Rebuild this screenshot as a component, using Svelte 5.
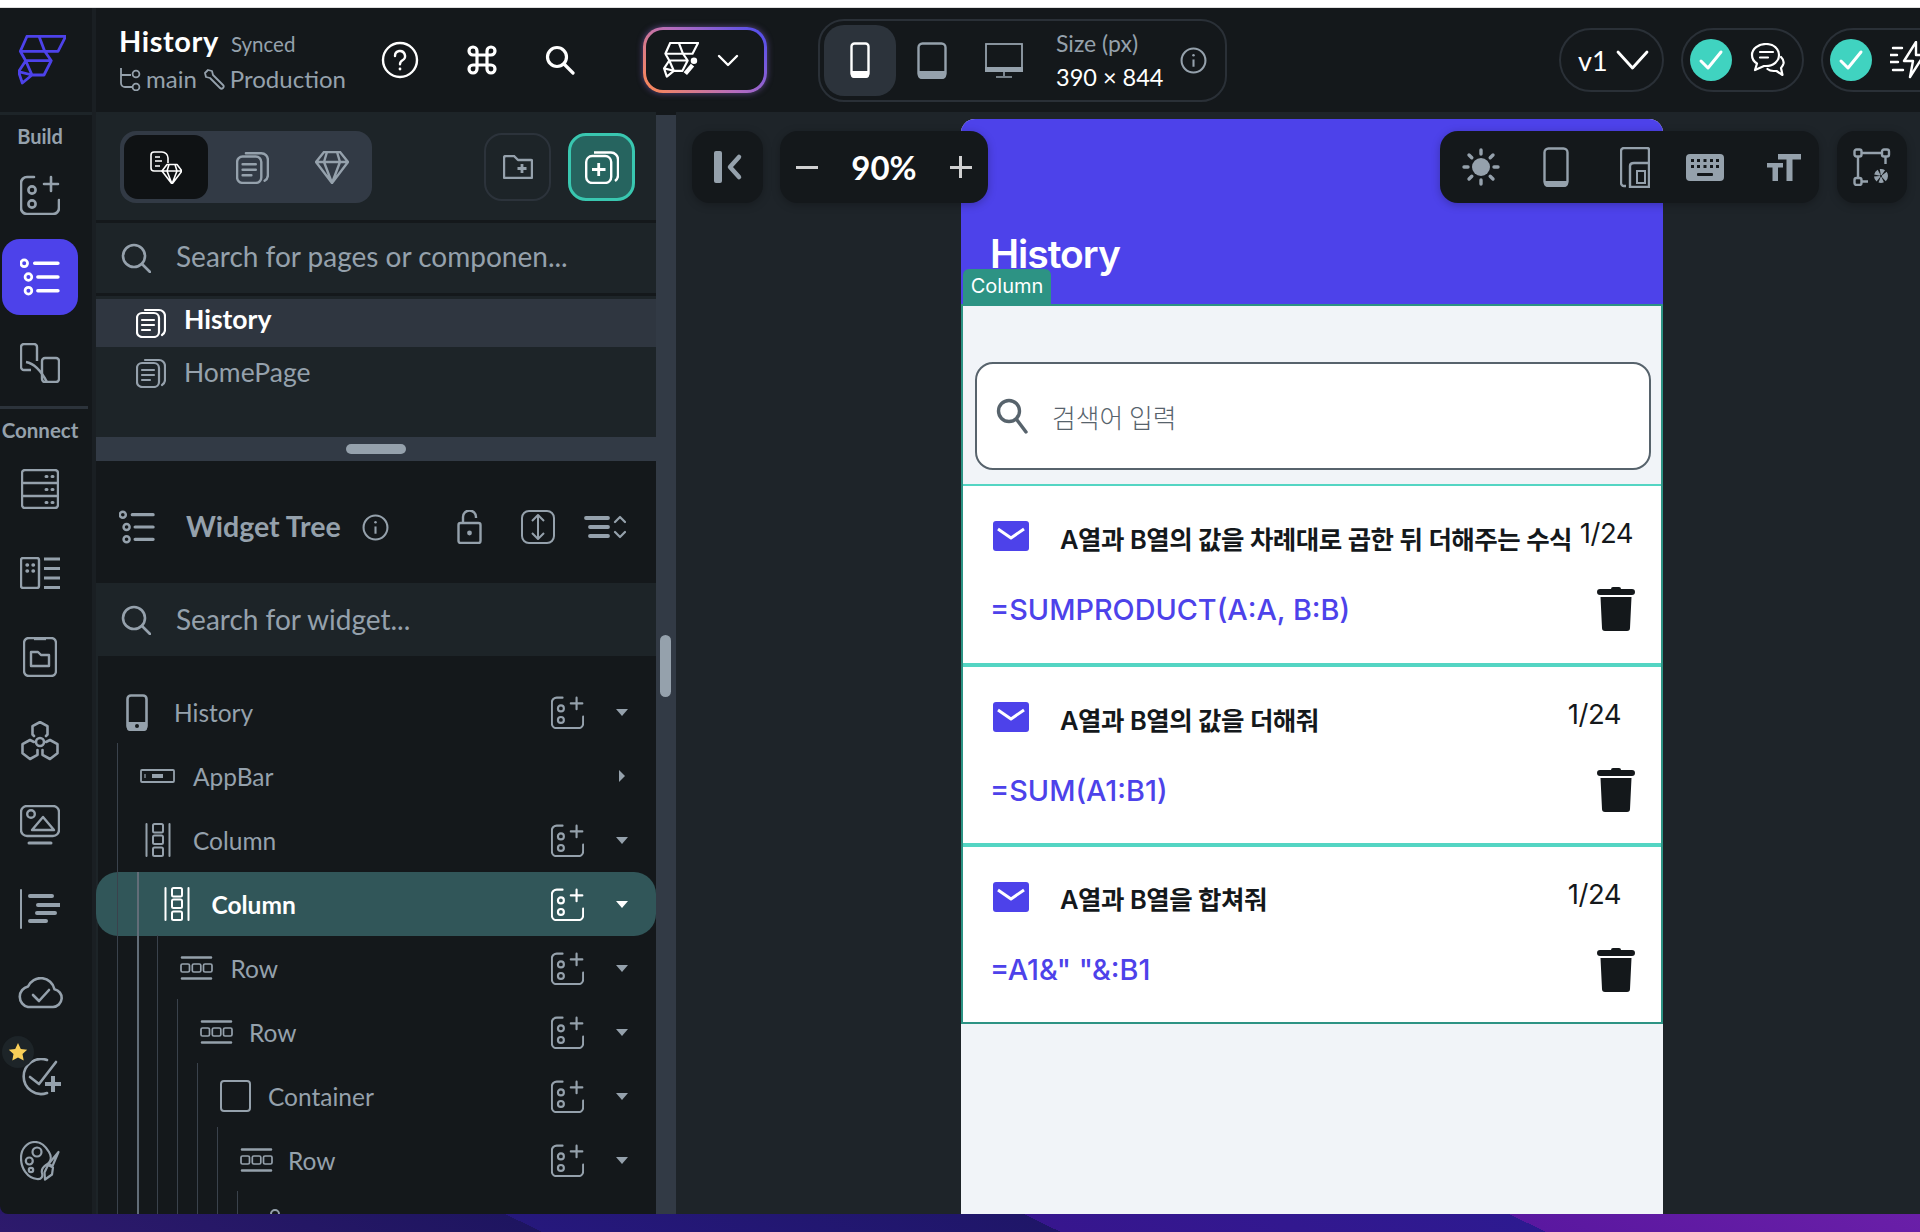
<script>
  const tree = [
    { label: "History", left: 30, text: 79, icon: "phone", add: true, caret: "down" },
    { label: "AppBar", left: 44, text: 98, icon: "appbar", add: false, caret: "right" },
    { label: "Column", left: 49, text: 98, icon: "column", add: true, caret: "down" },
    { label: "Column", left: 68, text: 116.5, icon: "column", add: true, caret: "down", active: true },
    { label: "Row", left: 84, text: 135.5, icon: "row", add: true, caret: "down" },
    { label: "Row", left: 104, text: 154, icon: "row", add: true, caret: "down" },
    { label: "Container", left: 124, text: 173, icon: "container", add: true, caret: "down" },
    { label: "Row", left: 144, text: 193, icon: "row", add: true, caret: "down" },
    { label: "", left: 169, text: 213, icon: "stack", add: false, caret: "none" }
  ];

  // guide lines of the tree: x and where they start, from the tree's top
  const guides = [
    { x: 21, top: 87 },
    { x: 41, top: 216, bright: true },
    { x: 61, top: 279 },
    { x: 81, top: 343 },
    { x: 101, top: 407 },
    { x: 121, top: 471 },
    { x: 141, top: 535 }
  ];

  const cards = [
    { title: "A열과 B열의 값을 차례대로 곱한 뒤 더해주는 수식", formula: "=SUMPRODUCT(A:A, B:B)", tight: true },
    { title: "A열과 B열의 값을 더해줘", formula: "=SUM(A1:B1)" },
    { title: "A열과 B열을 합쳐줘", formula: '=A1&" "&:B1' }
  ];
</script>

{#snippet addWidget(size)}
  <svg width={size} height={size} viewBox="0 0 40 40" fill="none" stroke="currentColor" stroke-width="2.6" stroke-linecap="round">
    <path d="M14 2H7a6 6 0 0 0-6 6v25a6 6 0 0 0 6 6h26a6 6 0 0 0 6-6v-8" />
    <circle cx="12" cy="15" r="3.6" />
    <circle cx="12" cy="29" r="3.6" />
    <path d="M31 2v14M24 9h14" />
  </svg>
{/snippet}

{#snippet pagesIcon(w, h)}
  <svg width={w} height={h} viewBox="0 0 30 30" fill="none" stroke="currentColor" stroke-width="2.2" stroke-linecap="round">
    <rect x="1" y="5" width="22" height="24" rx="5" />
    <path d="M9 2h14a6 6 0 0 1 6 6v14a6 6 0 0 1-3 5" />
    <path d="M6 12h12M6 17h12M6 22h8" />
  </svg>
{/snippet}

{#snippet searchIcon(w)}
  <svg width={w} height={w} viewBox="0 0 30 30" fill="none" stroke="currentColor" stroke-width="2.6" stroke-linecap="round">
    <circle cx="13" cy="13" r="11" />
    <path d="M21 21l8 8" />
  </svg>
{/snippet}

{#snippet listIcon(w)}
  <svg width={w} height={w} viewBox="0 0 38 38" fill="none" stroke="currentColor" stroke-width="2.6" stroke-linecap="round">
    <circle cx="4" cy="6" r="3.2" />
    <circle cx="8" cy="19" r="3.2" />
    <circle cx="8" cy="32" r="3.2" />
    <path d="M14 6h22M17 19h19M17 32h19" stroke-width="3.4" />
  </svg>
{/snippet}

{#snippet infoIcon(w)}
  <svg width={w} height={w} viewBox="0 0 26 26" fill="none" stroke="currentColor" stroke-width="2">
    <circle cx="13" cy="13" r="11.5" />
    <path d="M13 12v7" />
    <circle cx="13" cy="8" r="1.2" fill="currentColor" stroke="none" />
  </svg>
{/snippet}

{#snippet checkBadge()}
  <span class="check">
    <svg width="26" height="22" viewBox="0 0 26 22" fill="none" stroke="#fff" stroke-width="3" stroke-linecap="round" stroke-linejoin="round">
      <path d="M3 12l7 7L23 3" />
    </svg>
  </span>
{/snippet}

{#snippet logoShape()}
  <path d="M9 1.300H47.700L40 16.300H2.300zM21 1.300l5.700 15M2.300 16.300l5.400 9.400H33.300L26.700 16.300M33.300 25.700L26 40H14L7.700 25.700 0.500 36.700 4.300 48 14 40 0.500 36.700" />
{/snippet}

{#snippet treeIcon(name, color)}
  {#if name === "phone"}
    <svg width="22" height="37" viewBox="0 0 22 37" fill="none">
      <rect x="1.500" y="1.500" width="19" height="34" rx="3.500" stroke={color} stroke-width="2.600" />
      <path d="M1 28h20v6a3 3 0 0 1-3 3H4a3 3 0 0 1-3-3z" fill={color} />
      <circle cx="11" cy="32" r="2" fill="#14181b" />
    </svg>
  {:else if name === "appbar"}
    <svg width="35" height="14" viewBox="0 0 35 14" fill="none" stroke={color} stroke-width="1.800">
      <rect x="1" y="1" width="33" height="12" rx="1" />
      <rect x="12" y="5" width="11" height="4" fill={color} stroke="none" />
      <path d="M5 5v4" stroke-width="1.200" />
    </svg>
  {:else if name === "column"}
    <svg width="26" height="34" viewBox="0 0 26 34" fill="none" stroke={color} stroke-width="2">
      <path d="M1.500 1v32M24.500 1v32" stroke-linecap="round" />
      <rect x="8" y="1" width="10" height="8.500" rx="1.500" />
      <rect x="8" y="12.500" width="10" height="8.500" rx="1.500" />
      <rect x="8" y="24.500" width="10" height="8.500" rx="1.500" />
    </svg>
  {:else if name === "row"}
    <svg width="33" height="24" viewBox="0 0 33 24" fill="none" stroke={color} stroke-width="1.700">
      <path d="M2 1.500h29M2 22.500h29" stroke-width="2.600" stroke-linecap="round" />
      <rect x="1" y="8" width="8.500" height="8" rx="1.500" />
      <rect x="12.300" y="8" width="8.500" height="8" rx="1.500" />
      <rect x="23.500" y="8" width="8.500" height="8" rx="1.500" />
    </svg>
  {:else if name === "stack"}
    <svg width="20" height="32" viewBox="0 0 20 32" fill="none" stroke={color} stroke-width="2">
      <circle cx="10" cy="6" r="4" />
      <path d="M2 30V18h16v12" />
    </svg>
  {:else}
    <svg width="31" height="32" viewBox="0 0 31 32" fill="none">
      <rect x="1" y="1" width="29" height="30" rx="3" stroke={color} stroke-width="2" />
    </svg>
  {/if}
{/snippet}

<div class="page">
  <div class="strip"></div>

  <header class="topbar">
    <div class="logo-cell">
      <svg width="48" height="50" viewBox="0 0 48 50" fill="none" stroke="#4d42ea" stroke-width="2.800" stroke-linejoin="round">
        {@render logoShape()}
      </svg>
    </div>

    <div class="project">
      <div class="project-top">
        <span class="project-name">History</span>
        <span class="synced">Synced</span>
      </div>
      <div class="project-bottom">
        <svg width="22" height="24" viewBox="0 0 22 24" fill="none" stroke="currentColor" stroke-width="1.800">
          <path d="M2 1v15a4 4 0 0 0 4 4h7M2 8h10" />
          <circle cx="17" cy="7" r="3.400" />
          <circle cx="17" cy="20" r="3.400" />
        </svg>
        <span>main</span>
        <svg class="wrench" width="22" height="22" viewBox="0 0 22 22" fill="none" stroke="currentColor" stroke-width="1.800" stroke-linejoin="round">
          <path d="M2 5l3-3 4 1 1 4 10 10a2.100 2.100 0 0 1-3 3L7 10 3 9z" />
        </svg>
        <span>Production</span>
      </div>
    </div>

    <div class="top-tools">
      <svg width="38" height="38" viewBox="0 0 38 38" fill="none" stroke="#fff" stroke-width="2.400" stroke-linecap="round">
        <circle cx="19" cy="19" r="17" />
        <path d="M14 15a5 5 0 1 1 7.500 4.300c-1.700 1-2.500 2-2.500 4" />
        <circle cx="19" cy="28" r="1.400" fill="#fff" stroke="none" />
      </svg>
      <svg width="32" height="32" viewBox="0 0 32 32" fill="none" stroke="#fff" stroke-width="3.200">
        <path d="M11 11h10v10H11zM11 11H7a4 4 0 1 1 4-4zM21 11V7a4 4 0 1 1 4 4zM21 21h4a4 4 0 1 1-4 4zM11 21v4a4 4 0 1 1-4-4z" />
      </svg>
      <svg width="30" height="30" viewBox="0 0 30 30" fill="none" stroke="#fff" stroke-width="3.200" stroke-linecap="round">
        <circle cx="12" cy="12" r="9.500" />
        <path d="M19 19l9 9" />
      </svg>
    </div>

    <div class="ai-btn">
      <div class="ai-inner">
        <svg width="36" height="36" viewBox="0 0 48 50" fill="none" stroke="#fff" stroke-width="3" stroke-linejoin="round">
          {@render logoShape()}
          <path d="M30 44l10-12" stroke-width="6" />
          <circle cx="42" cy="26" r="4.500" fill="#fff" stroke="none" />
        </svg>
        <svg width="22" height="13" viewBox="0 0 22 13" fill="none" stroke="#fff" stroke-width="2.400" stroke-linecap="round" stroke-linejoin="round">
          <path d="M2 2l9 9 9-9" />
        </svg>
      </div>
    </div>

    <div class="devices">
      <div class="device selected">
        <svg width="20" height="36" viewBox="0 0 20 36" fill="none">
          <rect x="1.500" y="1.500" width="17" height="33" rx="3" stroke="#fff" stroke-width="2.400" />
          <path d="M1 29h18v4a3 3 0 0 1-3 3H4a3 3 0 0 1-3-3z" fill="#fff" />
        </svg>
      </div>
      <div class="device">
        <svg width="30" height="37" viewBox="0 0 30 37" fill="none">
          <rect x="1.500" y="1.500" width="27" height="34" rx="4" stroke="#95a1ac" stroke-width="2.400" />
          <path d="M1 29h28v4a4 4 0 0 1-4 4H5a4 4 0 0 1-4-4z" fill="#95a1ac" />
        </svg>
      </div>
      <div class="device">
        <svg width="38" height="35" viewBox="0 0 38 35" fill="none">
          <rect x="1" y="1" width="36" height="24" stroke="#95a1ac" stroke-width="1.800" />
          <path d="M0 24h38v5H0z" fill="#95a1ac" />
          <path d="M19 29v4M11 34h16" stroke="#95a1ac" stroke-width="1.600" />
        </svg>
      </div>
      <div class="size">
        <span class="size-label">Size (px)</span>
        <span class="size-value">390 × 844</span>
      </div>
      <span class="size-info">{@render infoIcon(27)}</span>
    </div>

    <div class="status">
      <div class="pill version">
        <span>v1</span>
        <svg width="33" height="20" viewBox="0 0 33 20" fill="none" stroke="#fff" stroke-width="2.800" stroke-linecap="round" stroke-linejoin="round">
          <path d="M2 2l14.500 16L31 2" />
        </svg>
      </div>
      <div class="pill status-pill">
        {@render checkBadge()}
        <svg width="36" height="34" viewBox="0 0 36 34" fill="none" stroke="#fff" stroke-width="2.200" stroke-linejoin="round" stroke-linecap="round">
          <path d="M16 1c7.500 0 13 4.600 13 11s-5.500 11-13 11h-2l-9 4 2-6.500C3.500 18.500 2 15.500 2 12 2 5.600 8.500 1 16 1z" />
          <path d="M10 9h13M10 14.500h8" />
          <path d="M31 14c2 2 3 4 2.500 6.500-.5 2-1.500 3.500-2.500 4.500l1.500 7-6-4h-3c-2.500 0-4.500-.8-6-2" />
        </svg>
      </div>
      <div class="pill status-pill last">
        {@render checkBadge()}
        <svg width="30" height="38" viewBox="0 0 30 38" fill="none" stroke="#fff" stroke-width="2.400" stroke-linejoin="round" stroke-linecap="round">
          <path d="M3 7h9M0 14h7M3 29h10M0 21h8" />
          <path d="M26 1L14 20h9l-3 16 14-22h-8z" />
        </svg>
      </div>
    </div>
  </header>

  <main class="main">
    <nav class="rail">
      <div class="rail-label">Build</div>
      <div class="rail-item first">{@render addWidget(40)}</div>
      <div class="rail-item"><div class="rail-active">{@render listIcon(40)}</div></div>
      <div class="rail-item after">
        <svg width="40" height="40" viewBox="0 0 40 40" fill="none" stroke="currentColor" stroke-width="2.400" stroke-linejoin="round">
          <path d="M11 27H4a3 3 0 0 1-3-3V4a3 3 0 0 1 3-3h10a3 3 0 0 1 3 3v14" />
          <rect x="22" y="15" width="17" height="24" rx="3" />
          <path d="M6 19c6 1 14 7 21 20" />
        </svg>
      </div>
      <div class="rail-sep"></div>
      <div class="rail-label connect">Connect</div>
      <div class="rail-item">
        <svg width="38" height="40" viewBox="0 0 38 40" fill="none" stroke="currentColor" stroke-width="2.400">
          <rect x="1" y="1" width="36" height="38" rx="3" />
          <path d="M1 14h36M1 27h36" />
          <path d="M25 7.500h1M31 7.500h1M25 20.500h1M31 20.500h1M25 33.500h1M31 33.500h1" stroke-width="3" stroke-linecap="round" />
        </svg>
      </div>
      <div class="rail-item">
        <svg width="40" height="32" viewBox="0 0 40 32" fill="none" stroke="currentColor" stroke-width="2.400">
          <rect x="1" y="1" width="18" height="30" rx="2" />
          <path d="M7 8h.5M13 8h.5M7 14h.5M13 14h.5" stroke-width="3.400" stroke-linecap="round" />
          <path d="M24 2h16M24 11.500h16M24 21h16M24 30.500h16" stroke-width="3" />
        </svg>
      </div>
      <div class="rail-item">
        <svg width="34" height="40" viewBox="0 0 34 40" fill="none" stroke="currentColor" stroke-width="2.400" stroke-linejoin="round">
          <rect x="1" y="1" width="32" height="38" rx="5" />
          <path d="M11 1.500h12" stroke-width="3.400" />
          <path d="M8 15h7l3 3h8v11H8z" />
        </svg>
      </div>
      <div class="rail-item">
        <svg width="40" height="40" viewBox="0 0 40 40" fill="none" stroke="currentColor" stroke-width="2.600" stroke-linejoin="round" stroke-linecap="round">
          <path d="M14 15l-1.500-1.500V5.200L20 1l7.500 4.200v8.300L26 15M14 21l-4-2-7.500 4.200v9L10 38l7.500-4.200v-4.800M26 21l4-2 7.500 4.200v9L30 38l-7.500-4.200v-4.800" />
          <circle cx="20" cy="21" r="4" />
        </svg>
      </div>
      <div class="rail-item">
        <svg width="40" height="40" viewBox="0 0 40 40" fill="none" stroke="currentColor" stroke-width="2.400" stroke-linejoin="round">
          <rect x="1" y="1" width="38" height="30" rx="6" />
          <circle cx="11" cy="9" r="3.800" />
          <path d="M12 25l11-13 11 13z" />
          <path d="M9 38h22" stroke-width="3" stroke-linecap="round" />
        </svg>
      </div>
      <div class="rail-item">
        <svg width="40" height="40" viewBox="0 0 40 40" fill="none" stroke="currentColor" stroke-linecap="round">
          <path d="M1 1v38" stroke-width="2" />
          <path d="M10 7h22M18 16h22M17 24h18M10 32h16" stroke-width="4" />
        </svg>
      </div>
      <div class="rail-item">
        <svg width="46" height="32" viewBox="0 0 46 32" fill="none" stroke="currentColor" stroke-width="2.600" stroke-linejoin="round" stroke-linecap="round">
          <path d="M11 30h25a9 9 0 0 0 1.500-17.800A14 14 0 0 0 11 9.500 10.500 10.500 0 0 0 11 30z" />
          <path d="M16 18l6 6 10-11" />
        </svg>
      </div>
      <div class="rail-item">
        <span class="star">
          <svg width="20" height="20" viewBox="0 0 20 20"><path d="M10 1l2.800 5.900 6.400.8-4.700 4.400 1.200 6.400L10 15.400l-5.700 3.100 1.200-6.400L.8 7.700l6.400-.8z" fill="#f9cf58" /></svg>
        </span>
        <svg class="check-plus" width="42" height="38" viewBox="0 0 42 38" fill="none" stroke="currentColor" stroke-width="2.600" stroke-linecap="round" stroke-linejoin="round">
          <path d="M26 2A17.500 17.500 0 1 0 26 35" />
          <path d="M9 19l9 7L35 4" />
          <path d="M32 18v16M24 26h16" stroke-width="4" stroke-linecap="butt" />
        </svg>
      </div>
      <div class="rail-item">
        <svg width="40" height="41" viewBox="0 0 40 41" fill="none" stroke="currentColor" stroke-width="2.200" stroke-linejoin="round">
          <path d="M15 1C7 1 1 8 1 17c0 10 6 20 16 21 5 .5 6-3 5-6-1-4 1-6 4-8 5-3 6-8 3-13-3-5-8-10-14-10z" />
          <circle cx="17" cy="11" r="4.500" />
          <circle cx="9.300" cy="20" r="3.500" />
          <circle cx="11" cy="29" r="2.200" />
          <path d="M38.500 11l-6 14-4-2zM28 24l5 2.500-1 7-7 5-.5-7z" />
        </svg>
      </div>
    </nav>

    <section class="panel">
      <div class="panel-top">
        <div class="tabs-row">
          <div class="tabs">
            <div class="tab on">
              <svg width="32" height="33" viewBox="0 0 32 33" fill="none" stroke="#fff" stroke-width="1.600" stroke-linejoin="round">
                <path d="M14 20H4a3 3 0 0 1-3-3V4a3 3 0 0 1 3-3h8a6 6 0 0 1 6 6v5" />
                <path d="M5 6h5M5 10h7M5 15h5" />
                <path d="M17 13.500h10l5 6.500-10 13-10-13zM12 20h20M19 13.500l-2 6.500 5 13 5-13-2-6.500" fill="#0f1214" />
              </svg>
            </div>
            <div class="tab">{@render pagesIcon(33, 33)}</div>
            <div class="tab">
              <svg width="34" height="33" viewBox="0 0 34 33" fill="none" stroke="currentColor" stroke-width="2.400" stroke-linejoin="round">
                <path d="M9 1h16l8 10-16 21L1 11zM1 11h32M12 1l-3 10 8 21 8-21-3-10" />
              </svg>
            </div>
          </div>
          <div class="panel-btn folder">
            <svg width="30" height="24" viewBox="0 0 30 24" fill="none" stroke="currentColor" stroke-width="2.400" stroke-linejoin="round">
              <path d="M1 3a2 2 0 0 1 2-2h8l4 4h13a1 1 0 0 1 1 1v16a1 1 0 0 1-1 1H2a1 1 0 0 1-1-1z" />
              <path d="M19 9v9M14.500 13.500h9" stroke-width="2.800" />
            </svg>
          </div>
          <div class="panel-btn newpage">
            <svg width="34" height="33" viewBox="0 0 34 33" fill="none" stroke="#fff" stroke-width="2.400">
              <rect x="1.200" y="5" width="25" height="27" rx="6" />
              <path d="M9 1.500h17a7 7 0 0 1 7 7v16a7 7 0 0 1-3 5.500" />
              <path d="M13.700 12v13M7 18.500h13.500" stroke-width="2.800" />
            </svg>
          </div>
        </div>

        <div class="search-row bordered">
          <span class="search-ico">{@render searchIcon(30)}</span>
          <span class="search-text">Search for pages or componen...</span>
        </div>

        <div class="pages">
          <div class="page-row current">
            {@render pagesIcon(30, 30)}
            <span>History</span>
          </div>
          <div class="page-row">
            {@render pagesIcon(30, 30)}
            <span>HomePage</span>
          </div>
        </div>
      </div>

      <div class="drag-bar"><span class="drag-handle"></span></div>

      <div class="panel-tree">
        <div class="tree-head">
          {@render listIcon(36)}
          <span class="tree-title">Widget Tree</span>
          <span class="tree-info">{@render infoIcon(27)}</span>
          <div class="tree-tools">
            <svg width="25" height="34" viewBox="0 0 25 34" fill="none" stroke="currentColor" stroke-width="2.400">
              <rect x="1.500" y="13" width="22" height="20" rx="2" />
              <path d="M6 13V7a6.500 6.500 0 0 1 13 0v1" />
              <circle cx="12.500" cy="23" r="2.400" fill="currentColor" stroke="none" />
            </svg>
            <svg width="34" height="34" viewBox="0 0 34 34" fill="none" stroke="currentColor" stroke-width="2">
              <rect x="1" y="1" width="32" height="32" rx="7" />
              <path d="M17 6v22M11 11l6-6 6 6M11 23l6 6 6-6" stroke-linejoin="round" />
            </svg>
            <svg class="sort" width="42" height="26" viewBox="0 0 42 26" fill="none" stroke="currentColor" stroke-linecap="round" stroke-linejoin="round">
              <path d="M2 4h22M6 13h18M6 22h18" stroke-width="3.800" />
              <path d="M31 8l5-5 5 5M31 18l5 5 5-5" stroke-width="2.200" />
            </svg>
          </div>
        </div>

        <div class="search-row tree-search">
          <span class="search-ico">{@render searchIcon(30)}</span>
          <span class="search-text">Search for widget...</span>
        </div>

        <div class="tree">
          <span class="guide edge"></span>
          {#each tree as row}
            <div class="tree-row" class:active={row.active} style="padding-left:{row.left}px">
              <span class="icon-box" style="width:{row.text - row.left}px">
                {@render treeIcon(row.icon, row.active ? "#fff" : "#95a1ac")}
              </span>
              <span class="tree-label">{row.label}</span>
              <span class="row-add">
                {#if row.add}{@render addWidget(33)}{/if}
              </span>
              <span class="caret {row.caret}"></span>
            </div>
          {/each}
          {#each guides as g}
            <span class="guide" class:bright={g.bright} style="left:{g.x}px;top:{g.top}px"></span>
          {/each}
        </div>
      </div>
    </section>

    <div class="scroll-gutter"><span class="scroll-thumb"></span></div>

    <section class="canvas">
      <div class="phone">
        <div class="appbar">
          <span class="appbar-title">History</span>
          <span class="tag">Column</span>
        </div>
        <div class="col">
          <div class="search-wrap">
            <div class="field">
              <svg width="32" height="36" viewBox="0 0 32 36" fill="none" stroke="#57636c" stroke-width="3.400" stroke-linecap="round">
                <circle cx="13" cy="13" r="10.500" />
                <path d="M21 22l9 12" />
              </svg>
              <span>검색어 입력</span>
            </div>
          </div>
          {#each cards as card}
            <article class="card">
              <div class="card-top">
                <svg class="mail" width="36" height="30" viewBox="0 0 36 30">
                  <rect width="36" height="30" rx="3" fill="#4d42ea" />
                  <path d="M5 8l13 9 13-9" fill="none" stroke="#fff" stroke-width="3" stroke-linejoin="round" />
                </svg>
                <span class="card-title">{card.title}</span>
                <span class="card-date" class:tight={card.tight}>1/24</span>
              </div>
              <div class="card-bottom">
                <span class="formula">{card.formula}</span>
                <svg width="38" height="44" viewBox="0 0 38 44" fill="#14181b">
                  <path d="M14 2a2 2 0 0 1 2-2h6a2 2 0 0 1 2 2h11a3 3 0 0 1 0 6H3a3 3 0 0 1 0-6zM3.500 10h31l-1.500 31a3 3 0 0 1-3 3H8a3 3 0 0 1-3-3z" />
                </svg>
              </div>
            </article>
          {/each}
        </div>
      </div>

      <div class="float collapse">
        <svg width="30" height="32" viewBox="0 0 30 32" fill="none">
          <rect x="1" y="0" width="8" height="32" rx="2" fill="#95a1ac" />
          <path d="M26 6l-9 10 9 10" stroke="#95a1ac" stroke-width="4.500" stroke-linecap="round" stroke-linejoin="round" />
        </svg>
      </div>

      <div class="float zoom">
        <span class="zoom-sign"></span>
        <span class="zoom-value">90%</span>
        <span class="zoom-sign plus"></span>
      </div>

      <div class="float tools">
        <svg width="38" height="38" viewBox="0 0 38 38" fill="#95a1ac">
          <circle cx="19" cy="19" r="9" />
          <g stroke="#95a1ac" stroke-width="3.400" stroke-linecap="round">
            <path d="M19 2v4M19 32v4M2 19h4M32 19h4M7 7l2.800 2.800M28.200 28.200L31 31M31 7l-2.800 2.800M9.800 28.200L7 31" />
          </g>
        </svg>
        <svg width="26" height="40" viewBox="0 0 26 40" fill="none">
          <rect x="1.500" y="1.500" width="23" height="37" rx="4" stroke="#95a1ac" stroke-width="2.400" />
          <path d="M1 34h24v2a4 4 0 0 1-4 4H5a4 4 0 0 1-4-4z" fill="#95a1ac" />
        </svg>
        <svg class="tablet" width="30" height="41" viewBox="0 0 30 41" fill="none" stroke="#95a1ac" stroke-width="2.400">
          <path d="M6 39H4a3 3 0 0 1-3-3V4a3 3 0 0 1 3-3h23a2 2 0 0 1 2 2v12" />
          <path d="M10 40V19c0-2 2-3 4-3h15v24z" />
          <rect x="17" y="24" width="8" height="12" stroke-width="2" />
        </svg>
        <svg width="38" height="27" viewBox="0 0 38 27">
          <rect width="38" height="27" rx="4" fill="#95a1ac" />
          <g fill="#14181b">
            <rect x="5" y="5" width="3" height="3" /><rect x="11" y="5" width="3" height="3" /><rect x="17.500" y="5" width="3" height="3" /><rect x="24" y="5" width="3" height="3" /><rect x="30" y="5" width="3" height="3" />
            <rect x="5" y="11" width="3" height="3" /><rect x="11" y="11" width="3" height="3" /><rect x="17.500" y="11" width="3" height="3" /><rect x="24" y="11" width="3" height="3" /><rect x="30" y="11" width="3" height="3" />
            <rect x="11" y="19" width="16" height="3" rx="1" />
          </g>
        </svg>
        <svg width="34" height="27" viewBox="0 0 34 27" fill="#95a1ac">
          <path d="M11 0h23v5.500h-8.500V27h-6V5.500H11zM0 9h16v4.500h-5V27H5.500V13.500H0z" />
        </svg>
      </div>

      <div class="float layout">
        <svg width="38" height="38" viewBox="0 0 38 38" fill="none" stroke="#95a1ac" stroke-width="2.400">
          <rect x="1.500" y="1.500" width="7" height="7" rx="2" />
          <rect x="29" y="1.500" width="7" height="7" rx="2" />
          <rect x="1.500" y="30" width="7" height="7" rx="2" />
          <path d="M9 5h20M5 9v21M9 33.500h6M32.500 9v7" />
          <circle cx="28" cy="28" r="4" stroke-width="6" stroke-dasharray="3.200 1.200" />
        </svg>
      </div>
    </section>
  </main>

  <footer class="desktop"></footer>
</div>

<style>
  :global(body) {
    margin: 0;
    background: #fff;
  }

  .page {
    width: 1920px;
    height: 1232px;
    display: flex;
    flex-direction: column;
    overflow: hidden;
    background: #2a1869;
    font-family: Lato, "Noto Sans CJK KR", sans-serif;
    color: #95a1ac;
  }

  svg {
    display: block;
    flex: none;
  }

  .strip {
    height: 7px;
    background: #fff;
    border-bottom: 1px solid #dfdfdf;
  }

  /* top bar */
  .topbar {
    height: 104px;
    display: flex;
    align-items: center;
    background: #14181b;
    flex: none;
  }

  .logo-cell {
    width: 96px;
    height: 100%;
    box-sizing: border-box;
    border-right: 4px solid #1a1f23;
    padding-right: 8px;
    display: flex;
    align-items: center;
    justify-content: center;
    flex: none;
  }

  .project {
    width: 259px;
    margin-left: 23px;
    padding-bottom: 4px;
    display: flex;
    flex-direction: column;
    gap: 6px;
    flex: none;
  }

  .project-top {
    display: flex;
    align-items: baseline;
    gap: 12px;
  }

  .project-name {
    font-size: 29px;
    font-weight: 700;
    letter-spacing: 0.600px;
    color: #fff;
  }

  .synced {
    font-size: 20.500px;
  }

  .project-bottom {
    display: flex;
    align-items: center;
    gap: 5px;
    font-size: 24px;
  }

  .wrench {
    margin-left: 1px;
  }

  .top-tools {
    width: 265px;
    display: flex;
    align-items: center;
    gap: 47px;
    margin-left: 3px;
    flex: none;
  }

  .ai-btn {
    width: 124px;
    height: 66px;
    box-sizing: border-box;
    padding: 3px;
    margin-left: -3px;
    border-radius: 20px;
    background: linear-gradient(45deg, #ff8a50, #b46cc0 50%, #4b4cf0);
    box-shadow: 0 0 6px rgba(150, 110, 220, 0.55);
    flex: none;
  }

  .ai-inner {
    height: 100%;
    box-sizing: border-box;
    padding-right: 8px;
    border-radius: 17px;
    background: #14181b;
    display: flex;
    align-items: center;
    justify-content: center;
    gap: 18px;
  }

  .devices {
    margin-left: 51px;
    width: 409px;
    height: 83px;
    box-sizing: border-box;
    border: 2px solid #2a3037;
    border-radius: 26px;
    padding: 4px;
    display: flex;
    align-items: center;
    flex: none;
  }

  .device {
    width: 72px;
    height: 71px;
    border-radius: 20px;
    display: flex;
    align-items: center;
    justify-content: center;
    flex: none;
  }

  .selected {
    background: #2c333b;
  }

  .size {
    margin-left: 16px;
    display: flex;
    flex-direction: column;
    gap: 6px;
    width: 122px;
  }

  .size-label {
    font-size: 23px;
    white-space: nowrap;
  }

  .size-value {
    font-size: 23.500px;
    color: #fff;
    white-space: nowrap;
  }

  .size-info {
    margin-left: 2px;
  }

  .status {
    margin-left: auto;
    display: flex;
    gap: 17px;
    width: 361px;
    flex: none;
  }

  .pill {
    height: 64px;
    box-sizing: border-box;
    border: 2px solid #2a3037;
    border-radius: 32px;
    display: flex;
    align-items: center;
    color: #fff;
    flex: none;
  }

  .version {
    width: 105px;
    padding-left: 17px;
    gap: 8px;
    font-size: 27px;
  }

  .status-pill {
    width: 123px;
    padding-left: 7px;
    gap: 18px;
  }

  .last {
    width: 130px;
  }

  .check {
    width: 42px;
    height: 42px;
    border-radius: 50%;
    background: #40d3c0;
    display: flex;
    align-items: center;
    justify-content: center;
    flex: none;
  }

  /* main area */
  .main {
    flex: 1;
    min-height: 0;
    display: flex;
    background: #14181b;
    border-bottom-left-radius: 8px;
  }

  .rail {
    width: 92px;
    flex: none;
    margin-right: 4px;
    padding-right: 12px;
    box-shadow: 4px 0 0 #1a1f23;
    display: flex;
    flex-direction: column;
    align-items: center;
    box-sizing: border-box;
    border-top: 3px solid #1d2428;
  }

  .rail-label {
    font-size: 20px;
    font-weight: 700;
    margin-top: 10px;
    line-height: 22px;
  }

  .connect {
    margin-top: 10px;
    margin-bottom: 6px;
    font-size: 20.500px;
    white-space: nowrap;
  }

  .rail-item {
    position: relative;
    width: 76px;
    height: 84px;
    display: flex;
    align-items: center;
    justify-content: center;
    flex: none;
  }

  .rail-item.first {
    margin-top: 6px;
    margin-bottom: -2px;
  }

  .rail-item.after {
    margin-top: 2px;
  }

  .rail-active {
    width: 76px;
    height: 76px;
    border-radius: 18px;
    background: #4d42ea;
    color: #fff;
    display: flex;
    align-items: center;
    justify-content: center;
  }

  .rail-sep {
    width: 88px;
    height: 3px;
    background: #2c333b;
    margin: 1px -8px 0 0;
    flex: none;
  }

  .star {
    position: absolute;
    left: 0;
    top: 1px;
    width: 32px;
    height: 32px;
    border-radius: 50%;
    background: #1d2428;
    display: flex;
    align-items: center;
    justify-content: center;
  }

  .check-plus {
    margin-left: 4px;
  }

  .panel {
    width: 560px;
    flex: none;
    display: flex;
    flex-direction: column;
    min-height: 0;
  }

  .panel-top {
    height: 325px;
    background: #1d2428;
    flex: none;
  }

  .tabs-row {
    height: 111px;
    box-sizing: border-box;
    display: flex;
    align-items: center;
    padding: 2px 21px 0 24px;
    border-bottom: 3px solid #14181b;
    gap: 17px;
  }

  .tabs {
    width: 252px;
    height: 72px;
    margin-right: 95px;
    box-sizing: border-box;
    padding: 4px;
    background: #323a45;
    border-radius: 16px;
    display: flex;
    flex: none;
  }

  .tab {
    width: 84px;
    display: flex;
    align-items: center;
    justify-content: center;
    border-radius: 14px;
    flex: none;
  }

  .tab:nth-child(2) {
    width: 88px;
  }

  .tab:nth-child(3) {
    width: 72px;
  }

  .tab.on {
    background: #0f1214;
  }

  .panel-btn {
    width: 67px;
    height: 68px;
    box-sizing: border-box;
    border-radius: 18px;
    display: flex;
    align-items: center;
    justify-content: center;
    flex: none;
  }

  .folder {
    border: 2px solid #2c333b;
  }

  .newpage {
    border: 3px solid #39c7b0;
    background: #26645f;
  }

  .search-row {
    display: flex;
    align-items: center;
    padding-left: 25px;
    box-sizing: border-box;
  }

  .bordered {
    height: 73px;
    border-bottom: 3px solid #14181b;
  }

  .search-text {
    font-size: 28px;
    margin-left: 25px;
    margin-bottom: 5px;
    white-space: nowrap;
  }

  .tree-search .search-text {
    margin-bottom: 2px;
  }

  .pages {
    padding-top: 3px;
  }

  .page-row {
    height: 52px;
    display: flex;
    align-items: center;
    padding-left: 40px;
    gap: 18px;
    font-size: 26.500px;
  }

  .page-row span {
    margin-bottom: 3px;
  }

  .page-row.current {
    height: 48px;
    background: #2f3640;
    color: #fff;
    font-weight: 700;
  }

  .page-row.current span {
    margin-bottom: 8px;
  }

  .drag-bar {
    height: 24px;
    background: #323a45;
    display: flex;
    align-items: center;
    justify-content: center;
    flex: none;
  }

  .drag-handle {
    width: 60px;
    height: 10px;
    border-radius: 5px;
    background: #95a1ac;
  }

  .panel-tree {
    flex: 1;
    min-height: 0;
    display: flex;
    flex-direction: column;
    background: #14181b;
    overflow: hidden;
  }

  .tree-head {
    height: 122px;
    box-sizing: border-box;
    padding: 10px 0 0 23px;
    display: flex;
    align-items: center;
    flex: none;
  }

  .tree-title {
    font-size: 28.500px;
    font-weight: 700;
    margin-left: 31px;
    margin-bottom: 2px;
    white-space: nowrap;
  }

  .tree-info {
    margin-left: 21px;
  }

  .tree-tools {
    margin-left: auto;
    padding-right: 30px;
    display: flex;
    align-items: center;
    gap: 39px;
  }

  .sort {
    margin-left: -10px;
  }

  .tree-search {
    height: 73px;
    background: #1d2428;
    flex: none;
  }

  .tree {
    position: relative;
    isolation: isolate;
    flex: 1;
    padding-top: 24px;
  }

  .guide {
    position: absolute;
    bottom: 0;
    width: 1px;
    background: #3a424c;
  }

  .guide.bright {
    width: 2px;
    background: #626d78;
  }

  .guide.edge {
    left: 0;
    top: 0;
    z-index: -1;
    background: #1d2428;
    width: 2px;
  }

  .tree-row {
    height: 64px;
    box-sizing: border-box;
    display: flex;
    align-items: center;
    padding-right: 28px;
    font-size: 24.500px;
  }

  .tree-row.active {
    background: #315659;
    border-radius: 22px;
    color: #fff;
    font-weight: 700;
  }

  .icon-box {
    flex: none;
    display: block;
  }

  .tree-label {
    flex: 1;
    margin-left: -1px;
  }

  .row-add {
    width: 33px;
    height: 33px;
    margin-right: 32px;
    flex: none;
  }

  .caret {
    width: 0;
    height: 0;
    flex: none;
    border-style: solid;
  }

  .caret.down {
    border-width: 7px 6px 0;
    border-color: currentColor transparent transparent;
  }

  .caret.right {
    border-width: 6px 0 6px 6px;
    border-color: transparent transparent transparent currentColor;
    margin-right: 3px;
  }

  .caret.none {
    border-width: 0;
  }

  .scroll-gutter {
    width: 20px;
    flex: none;
    background: #323a45;
    position: relative;
    margin-top: 3px;
  }

  .scroll-thumb {
    position: absolute;
    left: 4px;
    width: 11px;
    top: 520px;
    height: 62px;
    border-radius: 6px;
    background: #95a1ac;
  }

  /* canvas */
  .canvas {
    position: relative;
    flex: 1;
    background: #1e2429;
    padding: 7px 0 0 285px;
  }

  .phone {
    width: 702px;
    height: 1095px;
    background: #f1f4f8;
    border-radius: 14px 14px 0 0;
    display: flex;
    flex-direction: column;
  }

  .appbar {
    height: 185px;
    box-sizing: border-box;
    background: #4d42ea;
    border-radius: 14px 14px 0 0;
    position: relative;
    padding: 109px 0 0 29px;
    flex: none;
  }

  .appbar-title {
    font-family: Inter, sans-serif;
    font-size: 39px;
    font-weight: 600;
    line-height: 52px;
    letter-spacing: -1px;
    color: #fff;
  }

  .tag {
    position: absolute;
    left: 2px;
    bottom: 0;
    height: 35px;
    width: 88px;
    box-sizing: border-box;
    text-align: center;
    line-height: 35px;
    background: #2d9384;
    border-radius: 6px 6px 0 0;
    color: #fff;
    font-family: Inter, sans-serif;
    font-size: 20px;
  }

  .col {
    box-sizing: border-box;
    border: 2px solid #2d9384;
    flex: none;
    background: #f1f4f8;
  }

  .search-wrap {
    height: 178px;
    box-sizing: border-box;
    padding: 56px 10px 0 12px;
  }

  .field {
    height: 108px;
    box-sizing: border-box;
    background: #fff;
    border: 2px solid #57636c;
    border-radius: 18px;
    display: flex;
    align-items: center;
    padding-left: 19px;
    gap: 24px;
    font-family: "Noto Sans CJK KR", sans-serif;
    font-size: 25.800px;
    color: #57636c;
    font-weight: 300;
  }

  .card {
    height: 179.300px;
    box-sizing: border-box;
    background: #fff;
    border-top: 4px solid #54d5c3;
    padding: 32px 26px 0 30px;
    color: #14181b;
  }

  .card:first-of-type {
    border-top-width: 2px;
  }

  .card-top {
    display: flex;
    align-items: center;
    height: 36px;
  }

  .card-title {
    margin-left: 31px;
    font-family: Inter, "Noto Sans CJK KR", sans-serif;
    font-size: 25.500px;
    font-weight: 600;
    letter-spacing: -0.500px;
    white-space: nowrap;
    position: relative;
    top: 1px;
  }

  .card-date {
    margin-left: auto;
    margin-right: 14px;
    font-family: Inter, sans-serif;
    font-size: 27.500px;
    letter-spacing: -0.500px;
    position: relative;
    top: -3px;
  }

  .card-date.tight {
    margin-right: 2px;
  }

  .card-bottom {
    margin-top: 33px;
    height: 44px;
    display: flex;
    align-items: center;
    justify-content: space-between;
  }

  .formula {
    margin-left: -3px;
    font-family: Inter, sans-serif;
    font-size: 28.800px;
    font-weight: 500;
    color: #4d42ea;
  }

  .float {
    position: absolute;
    top: 19px;
    height: 72px;
    box-sizing: border-box;
    background: #14181b;
    border-radius: 18px;
    display: flex;
    align-items: center;
    box-shadow: 0 2px 8px rgba(0, 0, 0, 0.25);
  }

  .collapse {
    left: 16px;
    width: 71px;
    justify-content: center;
  }

  .zoom {
    left: 104px;
    width: 208px;
    padding: 0 16px;
    justify-content: space-between;
    color: #fff;
  }

  .zoom-value {
    font-size: 33px;
    font-weight: 700;
  }

  .zoom-sign {
    position: relative;
    width: 22px;
    height: 3px;
    background: #fff;
    opacity: 0.8;
  }

  .zoom-sign.plus::after {
    content: "";
    position: absolute;
    left: 9.500px;
    top: -9.500px;
    width: 3px;
    height: 22px;
    background: #fff;
  }

  .tools {
    left: 764px;
    width: 379px;
    padding: 0 18px 0 22px;
    justify-content: space-between;
  }

  .tablet {
    margin: 0 -7px 0 7px;
  }

  .layout {
    left: 1161px;
    width: 70px;
    justify-content: center;
  }

  .desktop {
    height: 18px;
    flex: none;
    background: linear-gradient(26deg, #2d1a6c 0%, #1e1560 27.700%, #26187c 27.700%, #1f1668 54.200%, #37168e 54.200%, #2d1a90 79%, #5a18a0 79%, #6a1fa8 100%);
  }
</style>
